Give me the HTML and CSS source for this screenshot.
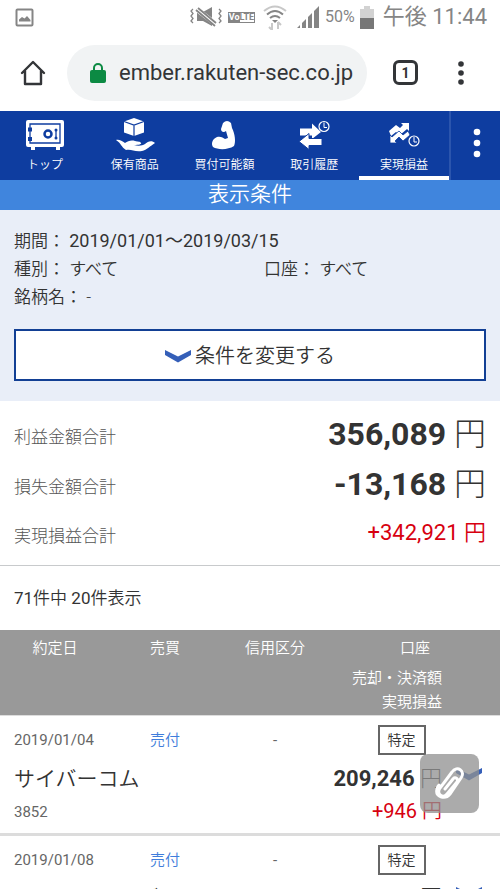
FILE: index.html
```html
<!DOCTYPE html>
<html lang="ja">
<head>
<meta charset="utf-8">
<meta name="viewport" content="width=device-width, initial-scale=1">
<title>実現損益</title>
<link rel="stylesheet" href="styles.css">
</head>
<body>
<div class="status">
  <svg class="status-photo" width="19" height="19" viewBox="0 0 19 19"><rect x="1.5" y="1.5" width="16" height="16" rx="1" fill="none" stroke="#858585" stroke-width="2"/><path d="M4 13.500v-2l3-2.500 2.500 1.500L12 8l3.500 4v1.500z" fill="#858585"/></svg>
  <svg width="34" height="20" viewBox="0 0 34 20" fill="none" stroke="#858585" stroke-width="1.300"><path d="M4 2l-2 2 2 2.500-2 2.500 2 2.500-2 2.500 2 2M30 2l2 2-2 2.500 2 2.500-2 2.500 2 2.500-2 2"/><path d="M8 5h6l9-5v19l-9-5H8z" fill="#858585" stroke="none"/><path d="M6 1l22 17" stroke="#fff" stroke-width="5"/><path d="M7 3l19 16M9 1l18 15" stroke-width="1.800"/></svg>
  <span class="volte"><b>Vo</b><i>LTE</i></span>
  <svg class="status-wifi" width="24" height="26" viewBox="0 0 24 26" fill="none" stroke="#858585" stroke-width="2"><path d="M1 7q11-9 22 0" stroke="#c8c8c8"/><path d="M4 10.500q8-7 16 0M7 14q5-4 10 0"/><path d="M9 16h6l-3 3z" fill="#858585" stroke="none"/><path d="M9 26v-7m-3 4l3 3M15 18v7m0-7l3 3" stroke="#c8c8c8"/></svg>
  <svg width="23" height="23" viewBox="0 0 23 23" fill="#858585"><path d="M0 22l3-3v3zM5 17l4-4v9H5zM11 11l4-4v15h-4zM17 5l5-5v22h-5z"/></svg>
  <span class="percent">50%</span>
  <svg width="14" height="23" viewBox="0 0 14 23"><path d="M4 0h6v3h4v9H0V3h4z" fill="#d2d2d2"/><path d="M0 12h14v11H0z" fill="#777"/></svg>
  <span class="clock">午後 11:44</span>
</div>
<div class="browser">
  <button class="icon-button" aria-label="ホーム"><svg width="26" height="26" viewBox="0 0 26 26" fill="none" stroke="#333538" stroke-width="2.400" stroke-linejoin="round" stroke-linecap="round"><path d="M2 13L13 2l11 11M5 11v13h16V11"/></svg></button>
  <div class="address">
    <svg width="16" height="20" viewBox="0 0 16 20"><rect y="7" width="16" height="13" rx="2" fill="#0c8a43"/><path d="M4 8V5a4 4 0 0 1 8 0v3" fill="none" stroke="#0c8a43" stroke-width="2"/></svg>
    <input aria-label="アドレス" value="ember.rakuten-sec.co.jp">
  </div>
  <button class="tabs" aria-label="タブ">1</button>
  <button class="icon-button browser-more" aria-label="メニュー"><svg width="6" height="24" viewBox="0 0 6 24" fill="#333538"><circle cx="3" cy="3" r="2.800"/><circle cx="3" cy="12" r="2.800"/><circle cx="3" cy="21" r="2.800"/></svg></button>
</div>
<nav class="nav">
  <a href="#top"><svg width="40" height="32" viewBox="0 0 40 32"><path d="M3 1h34q2 0 2 2v23q0 2-2 2h-2v3h-4v-3H10v3H6v-3H3q-2 0-2-2V3q0-2 2-2z" fill="#fff"/><g fill="none" stroke="#0e3da0" stroke-width="1.300"><path d="M5 5h30v19H5z"/><circle cx="23" cy="15" r="3.500" stroke-width="2.500"/><path d="M31 10.500v9"/></g><g fill="#0e3da0"><path d="M3 8.500h4v4H3zM3 18h4v4H3z"/><circle cx="31" cy="11" r="1.500"/><circle cx="31" cy="19" r="1.500"/></g></svg><span>トップ</span></a>
  <a href="#holdings"><svg width="40" height="36" viewBox="0 0 40 36"><path d="M19 1l10 3.500v11L19 19 9 15.500v-11z" fill="#fff"/><path d="M9 4.500L19 8l10-3.500M19 8v11" fill="none" stroke="#0e3da0" stroke-width="1.200"/><path d="M1 23c3-1 6 1 9 3 3-2 6-3 10-2 3 1 5 0 6 2 1 1-2 2-7 2 4 1 8 1 11-1 3-3 7-4 10-1-5 3-8 7-13 8-8 1-10-2-16-1-5-3-4-6-10-10z" fill="#fff"/></svg><span>保有商品</span></a>
  <a href="#power"><svg width="26" height="30" viewBox="0 0 26 30"><path d="M12 3q4-4 8 0l1 5c3 6 4 14 2 18-6 4-16 4-21 1-2-3-1-8 4-10 4-1 6 1 8 2l3-1-2-7c-2 2-5 1-5-2z" fill="#fff"/></svg><span>買付可能額</span></a>
  <a href="#history"><svg width="32" height="31" viewBox="0 0 32 31"><path d="M2 9h12V4l9 8.500-9 7V16H2z" fill="#fff"/><path d="M24 19H11v-5l-10 8 10 8v-4h13z" fill="#fff" stroke="#0e3da0"/><circle cx="26" cy="7" r="5" fill="#0e3da0" stroke="#fff" stroke-width="1.200"/><path d="M26 3v5h3" stroke="#fff" fill="none"/></svg><span>取引履歴</span></a>
  <a class="active" href="#realized"><svg width="32" height="26" viewBox="0 0 32 26"><path d="M1 9l7-6 4 3 3-3-2-2h8v8l-2-2-7 6-4-3-5 4z" fill="#fff"/><path d="M22 13l-7 6-4-4-4 4 2 2H2v-8l2 2 7-6 4 4 5-4z" fill="#fff" stroke="#0e3da0" stroke-width=".8"/><circle cx="26" cy="19" r="5" fill="#0e3da0" stroke="#fff" stroke-width="1.200"/><path d="M26 15v5h3" stroke="#fff" fill="none"/></svg><span>実現損益</span></a>
  <button class="nav-more" aria-label="その他"><svg width="8" height="30" viewBox="0 0 8 30" fill="#fff"><circle cx="4" cy="4" r="3.300"/><circle cx="4" cy="15" r="3.300"/><circle cx="4" cy="26" r="3.300"/></svg></button>
</nav>
<main>
  <h1>表示条件</h1>
  <section class="conditions">
    <div class="fields">
      <p class="wide">期間： <span class="period">2019/01/01～2019/03/15</span></p>
      <p>種別： すべて</p>
      <p>口座： すべて</p>
      <p class="wide">銘柄名： -</p>
    </div>
    <button class="change"><svg width="26" height="13" viewBox="0 0 26 13"><path d="M0 0l13 6.500L26 0v5l-13 7.500L0 5z" fill="#355fb8"/></svg>条件を変更する</button>
  </section>
  <dl class="totals">
    <div><dt>利益金額合計</dt><dd><b>356,089</b> 円</dd></div>
    <div><dt>損失金額合計</dt><dd><b>-13,168</b> 円</dd></div>
    <div class="net"><dt>実現損益合計</dt><dd>+342,921 <span class="yen">円</span></dd></div>
  </dl>
  <p class="count">71<span class="unit">件中</span> 20<span class="unit">件表示</span></p>
  <table>
    <colgroup><col class="col"><col class="col"><col class="col"><col><col class="col-open"></colgroup>
    <thead>
      <tr><th>約定日</th><th>売買</th><th>信用区分</th><th colspan="2">口座</th></tr>
      <tr class="sub"><th colspan="4">売却・決済額<br>実現損益</th><th></th></tr>
    </thead>
    <tbody>
      <tr class="meta"><td class="date">2019/01/04</td><td class="side">売付</td><td>-</td><td class="account" colspan="2"><span>特定</span></td></tr>
      <tr class="detail"><td colspan="2"><div class="name">サイバーコム</div><div class="code">3852</div></td><td class="sums" colspan="2"><div class="amount"><b>209,246</b> 円</div><div class="gain">+946 <span class="yen">円</span></div></td><td class="open"><svg width="26" height="13" viewBox="0 0 26 13"><path d="M0 0l13 6.500L26 0v5l-13 7.500L0 5z" fill="#355fb8"/></svg></td></tr>
    </tbody>
    <tbody>
      <tr class="meta"><td class="date">2019/01/08</td><td class="side">売付</td><td>-</td><td class="account" colspan="2"><span>特定</span></td></tr>
      <tr class="detail"><td colspan="2"><div class="name">アイ・エス・ビー</div></td><td class="sums" colspan="2"><div class="amount">円</div></td><td class="open"><svg width="26" height="13" viewBox="0 0 26 13"><path d="M0 0l13 6.500L26 0v5l-13 7.500L0 5z" fill="#355fb8"/></svg></td></tr>
    </tbody>
  </table>
</main>
<button class="clip" aria-label="添付"><svg width="32" height="36" viewBox="0 0 32 36" fill="none" stroke="#fff" stroke-width="3" stroke-linecap="round"><path d="M11 23l8-10c2-3 6 0 4 3L13 28c-4 5-11 0-7-6L18 6c5-7 14-1 9 6L16 28c-5 6-15 3-13-5 0-2 1-3 2-4"/></svg></button>
</body>
</html>
```
FILE: styles.css
```css
* { box-sizing: border-box; }
body {
  margin: 0;
  height: 100vh;
  overflow: hidden;
  background: #fff;
  color: #333;
  font-family: Roboto, "Noto Sans CJK JP", sans-serif;
  font-size: 17px;
  line-height: 28px;
}
h1, p, dl, dd { margin: 0; }
button { border: 0; padding: 0; background: none; font: inherit; color: inherit; }
svg { display: block; flex: none; }
b { font-weight: 700; }
.yen, .unit { font-weight: 350; }

.status { display: flex; align-items: center; gap: 5px; height: 34px; padding: 0 13px 0 15px; color: #858585; }
.status-photo { margin-right: auto; }
.volte { display: flex; border: 1px solid #858585; font-size: 9px; line-height: 9px; }
.volte b { background: #858585; color: #fff; }
.volte i { font-style: normal; font-weight: 700; }
.status-wifi { margin: 0 5px 0 3px; }
.percent { font-size: 16px; }
.clock { margin-left: 4px; font-size: 22px; }

.browser { display: flex; align-items: center; height: 77px; padding: 0 20px; }
.address { flex: 1; display: flex; align-items: center; gap: 13px; min-width: 0; height: 56px; margin-left: 21px; padding: 0 12px 0 23px; border-radius: 28px; background: #f1f3f4; }
.address input { flex: 1; min-width: 0; padding: 0; border: 0; background: none; color: #333538; font: inherit; font-size: 22px; }
.tabs { width: 25px; height: 25px; margin: 0 40px 0 26px; border: 3px solid #333538; border-radius: 6px; font-size: 14px; font-weight: 700; line-height: 18px; }
.browser-more { margin-right: 16px; }

.nav { display: flex; height: 69px; background: #0e3da0; color: #fff; }
.nav a { flex: 1; display: flex; flex-direction: column; color: inherit; text-decoration: none; text-align: center; font-size: 12px; line-height: 24px; border-bottom: 4px solid transparent; }
.nav a svg { height: 36px; margin: 6px auto 0; }
.nav a span { font-weight: 350; }
.nav .active { border-color: #fff; }
.nav-more { display: flex; justify-content: center; align-items: center; width: 51px; padding: 0 0 5px 3px; border-left: 2px solid #2b55ad; }

h1 { background: #4085dd; color: #fff; font-size: 21px; font-weight: 350; line-height: 28px; text-align: center; height: 30px; }
.conditions { padding: 17px 14px 20px; background: #e9eef8; }
.fields { display: grid; grid-template-columns: 250px 1fr; font-weight: 350; }
.period { font-size: 18px; font-weight: 400; }
.wide { grid-column: 1 / -1; }
.change { display: flex; align-items: center; justify-content: center; gap: 4px; width: 100%; height: 52px; margin-top: 18px; padding-top: 2px; border: 2px solid #123f94; background: #fff; font-size: 20px; font-weight: 350; }

.totals { padding: 8px 14px; border-bottom: 1px solid #c8cacc; }
.totals div { display: flex; justify-content: space-between; align-items: center; height: 50px; }
.totals dt { padding-top: 6px; color: #555; font-weight: 300; }
.totals dd { font-size: 32px; font-weight: 300; }
.totals .net { height: 48px; }
.totals .net dd { color: #d7000f; font-size: 22px; font-weight: 400; }
.count { padding: 18px 14px; }

table { width: 100%; border-collapse: collapse; table-layout: fixed; font-size: 15px; line-height: 24px; text-align: center; }
td, th { padding: 0; font-weight: 400; }
th { font-weight: 350; }
.col { width: 22%; }
.col-open { width: 58px; }
thead { background: #999; color: #fff; border-bottom: 1px solid #ddd; }
thead tr:first-child { height: 36px; }
.sub th { height: 49px; vertical-align: top; text-align: right; }
tbody { border-bottom: 3px solid #dcdcdc; color: #666; }
.meta { height: 50px; }
.date { padding-left: 14px; text-align: left; }
.side { color: #3f7ddb; font-weight: 350; }
.account { padding-right: 27px; }
.account span { display: inline-block; width: 48px; height: 30px; border: 2px solid #666; color: #333; font-size: 14px; font-weight: 350; line-height: 26px; }
.detail td { height: 69px; vertical-align: top; }
.name { padding-left: 14px; text-align: left; color: #333; font-size: 21px; font-weight: 350; line-height: 28px; }
.code { padding: 7px 14px; text-align: left; }
.sums { text-align: right; }
.amount { color: #333; font-size: 22px; font-weight: 300; line-height: 28px; }
.gain { padding-top: 6px; color: #d7000f; font-size: 20px; }
.open svg { margin: 3px 0 0 14px; }

.clip { position: fixed; right: 21px; bottom: 76px; display: flex; align-items: center; justify-content: center; width: 59px; height: 59px; border-radius: 8px; background: rgba(145, 145, 145, 0.76); }
```
